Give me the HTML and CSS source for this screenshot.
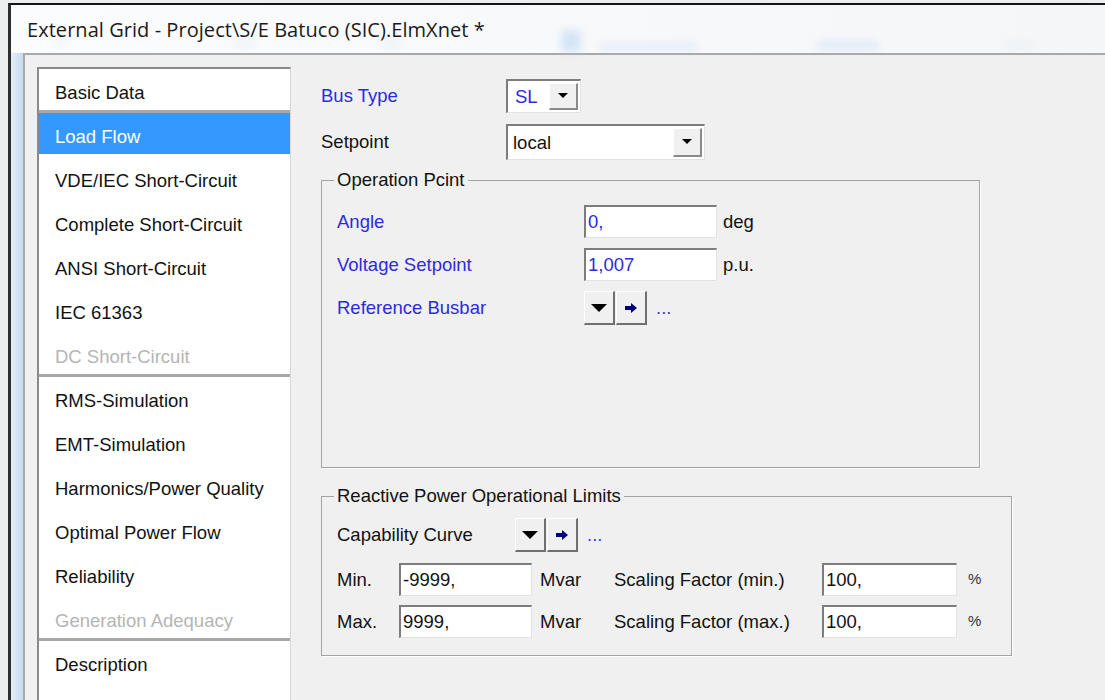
FILE: index.html
```html
<!DOCTYPE html>
<html lang="en">
<head>
<meta charset="utf-8">
<title>External Grid - Project\S/E Batuco (SIC).ElmXnet *</title>
<link rel="stylesheet" href="styles.css">
</head>
<body>
<div class="desk">
  <div class="window">
    <div class="titlebar">
      <span class="glass g1"></span>
      <span class="glass g2"></span>
      <span class="glass g3"></span>
      <span class="glass g4"></span>
      <span class="glass g5"></span>
      <span class="glass g6"></span>
      <span class="glass g7"></span>
      <span class="title">External Grid - Project\S/E Batuco (SIC).ElmXnet *</span>
    </div>
    <div class="frame">
      <div class="frame-edge"></div>
      <div class="client">
        <ul class="sections">
          <li class="item end">Basic Data</li>
          <li class="item sel">Load Flow</li>
          <li class="item">VDE/IEC Short-Circuit</li>
          <li class="item">Complete Short-Circuit</li>
          <li class="item">ANSI Short-Circuit</li>
          <li class="item">IEC 61363</li>
          <li class="item off end">DC Short-Circuit</li>
          <li class="item">RMS-Simulation</li>
          <li class="item">EMT-Simulation</li>
          <li class="item">Harmonics/Power Quality</li>
          <li class="item">Optimal Power Flow</li>
          <li class="item">Reliability</li>
          <li class="item off end">Generation Adequacy</li>
          <li class="item">Description</li>
        </ul>

        <div class="pane">
          <div class="line bus">
            <span class="top-lbl blue">Bus Type</span>
            <div class="combo short">
              <span class="combo-val blue">SL</span>
              <span class="combo-btn"><svg width="10" height="6" viewBox="0 0 10 6"><path d="M0 0h10L5 5z" fill="#000"/></svg></span>
            </div>
          </div>
          <div class="line setp">
            <span class="top-lbl">Setpoint</span>
            <div class="combo long">
              <span class="combo-val">local</span>
              <span class="combo-btn"><svg width="10" height="6" viewBox="0 0 10 6"><path d="M0 0h10L5 5z" fill="#000"/></svg></span>
            </div>
          </div>

          <fieldset class="group op">
            <legend>Operation Pcint</legend>
            <div class="body">
              <div class="frow">
                <span class="op-lbl blue">Angle</span>
                <span class="field blue">0,</span>
                <span class="unit">deg</span>
              </div>
              <div class="frow gap">
                <span class="op-lbl blue">Voltage Setpoint</span>
                <span class="field blue">1,007</span>
                <span class="unit">p.u.</span>
              </div>
              <div class="frow gap tall">
                <span class="op-lbl blue">Reference Busbar</span>
                <span class="pick"><svg width="16" height="8" viewBox="0 0 16 8"><path d="M0 0h16L8 8z" fill="#000"/></svg></span>
                <span class="pick"><svg width="12" height="10" viewBox="0 0 12 10"><path d="M0 3h6V0l6 5-6 5V7H0z" fill="#000080"/></svg></span>
                <span class="more">...</span>
              </div>
            </div>
          </fieldset>

          <fieldset class="group rq">
            <legend>Reactive Power Operational Limits</legend>
            <div class="body">
              <div class="frow tall">
                <span class="curve-lbl">Capability Curve</span>
                <span class="pick"><svg width="16" height="8" viewBox="0 0 16 8"><path d="M0 0h16L8 8z" fill="#000"/></svg></span>
                <span class="pick"><svg width="12" height="10" viewBox="0 0 12 10"><path d="M0 3h6V0l6 5-6 5V7H0z" fill="#000080"/></svg></span>
                <span class="more">...</span>
              </div>
              <div class="frow gap-min">
                <span class="lim-lbl">Min.</span>
                <span class="field">-9999,</span>
                <span class="mvar">Mvar</span>
                <span class="sc-lbl">Scaling Factor (min.)</span>
                <span class="field wide">100,</span>
                <span class="pct">%</span>
              </div>
              <div class="frow gap-max">
                <span class="lim-lbl">Max.</span>
                <span class="field">9999,</span>
                <span class="mvar">Mvar</span>
                <span class="sc-lbl">Scaling Factor (max.)</span>
                <span class="field wide">100,</span>
                <span class="pct">%</span>
              </div>
            </div>
          </fieldset>
        </div>
      </div>
    </div>
  </div>
</div>
</body>
</html>
```
FILE: styles.css
```css
* {
  box-sizing: border-box;
}

body {
  margin: 0;
  background: #eceef0;
  font-family: "Liberation Sans", Arial, sans-serif;
}

/* desktop behind the dialog */
.desk {
  width: 1105px;
  height: 700px;
  overflow: hidden;
  display: flex;
  padding: 3px 0 0 8px;
  background: #eceef0;
}

.window {
  flex: 1;
  display: flex;
  flex-direction: column;
  border-top: 2px solid #151515;
  border-left: 3px solid #2e2e2e;
  background: #f0f0f0;
}

/* glass caption */
.titlebar {
  position: relative;
  flex: none;
  height: 48px;
  display: flex;
  align-items: center;
  padding-left: 16px;
  background: linear-gradient(to right, #fbfcfd, #f5f6f7);
}

.title {
  position: relative;
  font-family: "Open Sans", "Noto Sans", sans-serif;
  font-size: 20px;
  letter-spacing: 0.05px;
  color: #1b1b1b;
  white-space: nowrap;
}

/* blurred shapes seen through the glass */
.glass {
  position: absolute;
  border-radius: 4px;
  background: #a9cbf2;
  filter: blur(4px);
}
.g1 { left: 550px; top: 25px; width: 20px; height: 22px; opacity: 0.45; }
.g2 { left: 588px; top: 38px; width: 100px; height: 8px; opacity: 0.25; }
.g3 { left: 806px; top: 36px; width: 62px; height: 9px; opacity: 0.3; }
.g4 { left: 994px; top: 36px; width: 30px; height: 8px; opacity: 0.12; }
.g5 { left: 44px; top: 32px; width: 12px; height: 9px; opacity: 0.15; }
.g6 { left: 222px; top: 35px; width: 22px; height: 8px; opacity: 0.15; }
.g7 { left: 370px; top: 33px; width: 20px; height: 10px; opacity: 0.15; }

.frame {
  flex: 1;
  display: flex;
  min-height: 0;
}

.frame-edge {
  flex: none;
  width: 12px;
  background: linear-gradient(to right, #e4edf6, #c6daee);
}

.client {
  flex: 1;
  display: flex;
  padding: 12px 0 0 12px;
  border-top: 2px solid #a9a9a9;
  border-left: 2px solid #a9a9a9;
  background: #f0f0f0;
  font-size: 18.5px;
  color: #121212;
}

/* page list on the left */
.sections {
  flex: none;
  width: 254px;
  margin: 0;
  padding: 0;
  list-style: none;
  background: #fff;
  border-top: 2px solid #8b8b8b;
  border-left: 2px solid #8b8b8b;
  border-right: 1px solid #d8d8d8;
}

.item {
  height: 44px;
  display: flex;
  align-items: center;
  padding: 3px 0 0 16px;
  white-space: nowrap;
}

.item.end {
  border-bottom: 3px solid #a8a8a8;
  padding-top: 6px;
}

.item.sel {
  background: linear-gradient(#3399ff, #3399ff) top / 100% 41px no-repeat;
  color: #fff;
}

.item.off {
  color: #b5b5b5;
}

/* property page */
.pane {
  margin-left: 30px;
  padding-top: 12px;
  display: flex;
  flex-direction: column;
  align-items: flex-start;
}

.blue {
  color: #2b2be0;
}

.line,
.frow {
  display: flex;
  align-items: center;
  white-space: nowrap;
}

.bus { height: 34px; }
.setp { height: 36px; margin-top: 11px; }

.top-lbl { width: 185px; }

.combo {
  height: 100%;
  display: flex;
  align-items: center;
  padding: 2px;
  background: #fff;
  border-style: solid;
  border-width: 2px 1px 1px 2px;
  border-color: #7d7d7d #e2e2e2 #e2e2e2 #7d7d7d;
}
.combo.short { width: 75px; }
.combo.long { width: 199px; }

.combo-val { flex: 1; padding-left: 5px; }
.combo.long .combo-val { padding-left: 3px; }

.combo-btn {
  width: 29px;
  height: 100%;
  display: flex;
  align-items: center;
  justify-content: center;
  background: #f0f0f0;
  border-style: solid;
  border-width: 1px 2px 2px 1px;
  border-color: #fff #8a8a8a #8a8a8a #fff;
}

/* group boxes */
.group {
  margin: 0;
  padding: 0 0 0 15px;
  min-width: 0;
  border: 1px solid #a3a3a3;
  box-shadow: 1px 1px 0 #fff;
}

.group legend {
  margin-left: -3px;
  padding: 0 3px;
  line-height: 22px;
}

.op { margin-top: 9px; width: 659px; }
.op .body { height: 276px; padding-top: 14px; }

.rq { margin-top: 17px; width: 691px; }
.rq .body { height: 148px; padding-top: 11px; }

.frow { height: 33px; }
.frow.tall { height: 34px; }
.frow.gap { margin-top: 10px; }
.frow.gap-min { margin-top: 11px; }
.frow.gap-max { margin-top: 9px; }

.op-lbl { width: 247px; }
.curve-lbl { width: 178px; }
.lim-lbl { width: 62px; }
.mvar { width: 74px; margin-left: 8px; }
.sc-lbl { width: 208px; }

.field {
  width: 133px;
  height: 33px;
  display: flex;
  align-items: center;
  padding-left: 2px;
  background: #fff;
  border-style: solid;
  border-width: 2px 1px 1px 2px;
  border-color: #7d7d7d #e2e2e2 #e2e2e2 #7d7d7d;
}
.field.wide { width: 135px; }

.unit { margin-left: 6px; }

.pct {
  margin-left: 11px;
  margin-top: -3px;
  font-size: 15px;
  color: #333;
}

.pick {
  width: 31px;
  height: 34px;
  display: flex;
  align-items: center;
  justify-content: center;
  background: #f0f0f0;
  border-style: solid;
  border-width: 1px 2px 2px 1px;
  border-color: #fff #707070 #707070 #fff;
}
.pick + .pick { margin-left: 1px; }

.more {
  margin-left: 9px;
  color: #4a36dc;
}
```
